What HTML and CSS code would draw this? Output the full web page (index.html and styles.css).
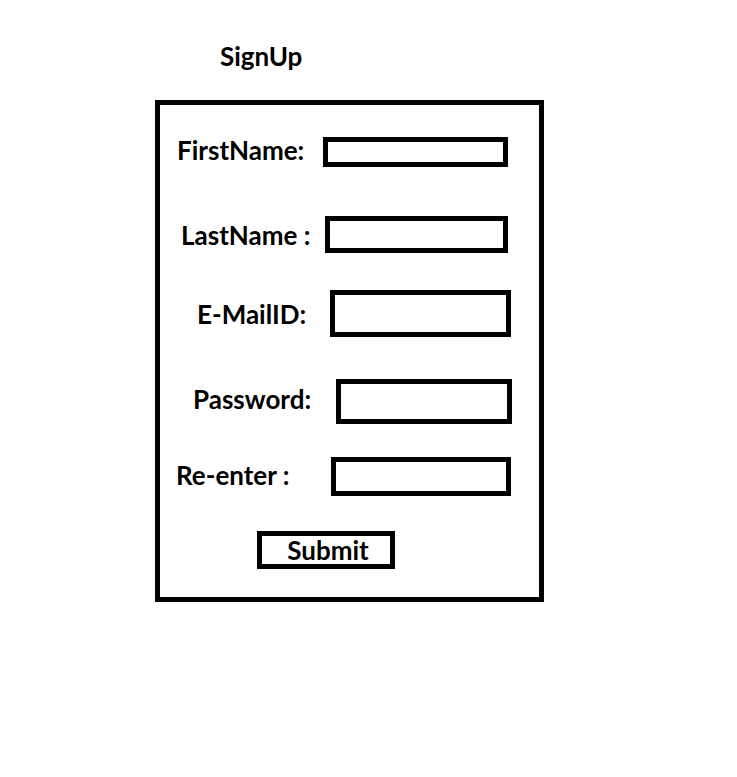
FILE: index.html
```html
<!DOCTYPE html>
<html lang="en">
<head>
<meta charset="utf-8">
<title>SignUp</title>
<link rel="stylesheet" href="styles.css">
</head>
<body>
<h1 class="title">SignUp</h1>
<form class="card">
  <div class="row row--first">
    <label class="label">FirstName:</label>
    <span class="field"></span>
  </div>
  <div class="row row--last">
    <label class="label">LastName :</label>
    <span class="field"></span>
  </div>
  <div class="row row--email">
    <label class="label">E-MailID:</label>
    <span class="field"></span>
  </div>
  <div class="row row--pass">
    <label class="label">Password:</label>
    <span class="field"></span>
  </div>
  <div class="row row--again">
    <label class="label">Re-enter :</label>
    <span class="field"></span>
  </div>
  <div class="submit">Submit</div>
</form>
</body>
</html>
```
FILE: styles.css
```css
* { box-sizing: border-box; }
html, body { background: #fff; }
body {
  margin: 0;
  font-family: Lato, "Open Sans", sans-serif;
  font-weight: 700;
  color: #000;
}
.title {
  margin: 41px 0 0 220px;
  font-size: 26px;
  line-height: 30px;
  font-weight: 700;
}
.card {
  margin: 29px 0 0 155px;
  width: 389px;
  height: 502px;
  border: 5px solid #000;
  padding-top: 32px;
  display: flex;
  flex-direction: column;
}
.row {
  display: flex;
  align-items: center;
}
.label {
  font-size: 26px;
  line-height: 30px;
  flex: 0 0 auto;
  white-space: nowrap;
}
.field {
  display: block;
  border: 5px solid #000;
  flex: 0 0 auto;
}
.row--first .label { width: 163px; padding-left: 17px; margin-top: -5px; }
.row--first .field { width: 185px; height: 30px; }
.row--last { margin-top: 49px; }
.row--last .label { width: 165px; padding-left: 21px; }
.row--last .field { width: 183px; height: 37px; }
.row--email { margin-top: 37px; }
.row--email .label { width: 170px; padding-left: 37px; }
.row--email .field { width: 181px; height: 47px; }
.row--pass { margin-top: 42px; }
.row--pass .label { width: 176px; padding-left: 33px; margin-top: -6px; }
.row--pass .field { width: 176px; height: 45px; }
.row--again { margin-top: 33px; }
.row--again .label { width: 171px; padding-left: 16px; margin-top: -4px; }
.row--again .field { width: 180px; height: 39px; }
.submit {
  margin: 35px 0 0 97px;
  width: 138px;
  height: 38px;
  border: 5px solid #000;
  font-size: 26px;
  line-height: 28px;
  text-align: center;
  padding-left: 4px;
}
```
